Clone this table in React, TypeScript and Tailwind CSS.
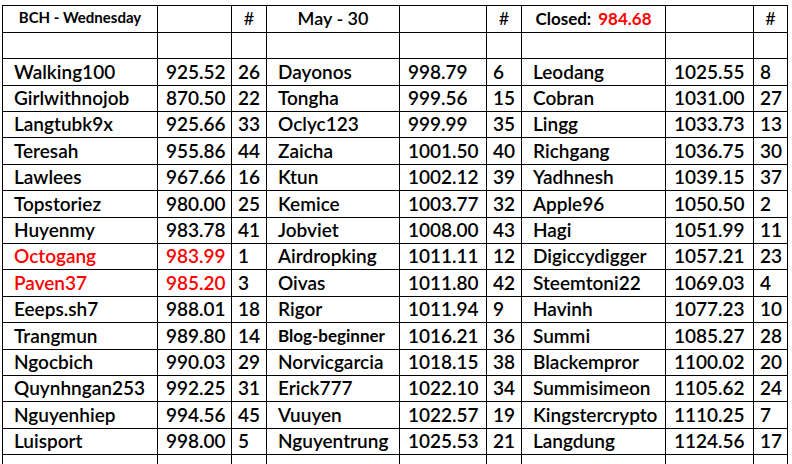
const rows: [string, string, string][][] = [
  [["Walking100", "925.52", "26"], ["Dayonos", "998.79", "6"], ["Leodang", "1025.55", "8"]],
  [["Girlwithnojob", "870.50", "22"], ["Tongha", "999.56", "15"], ["Cobran", "1031.00", "27"]],
  [["Langtubk9x", "925.66", "33"], ["Oclyc123", "999.99", "35"], ["Lingg", "1033.73", "13"]],
  [["Teresah", "955.86", "44"], ["Zaicha", "1001.50", "40"], ["Richgang", "1036.75", "30"]],
  [["Lawlees", "967.66", "16"], ["Ktun", "1002.12", "39"], ["Yadhnesh", "1039.15", "37"]],
  [["Topstoriez", "980.00", "25"], ["Kemice", "1003.77", "32"], ["Apple96", "1050.50", "2"]],
  [["Huyenmy", "983.78", "41"], ["Jobviet", "1008.00", "43"], ["Hagi", "1051.99", "11"]],
  [["Octogang", "983.99", "1"], ["Airdropking", "1011.11", "12"], ["Digiccydigger", "1057.21", "23"]],
  [["Paven37", "985.20", "3"], ["Oivas", "1011.80", "42"], ["Steemtoni22", "1069.03", "4"]],
  [["Eeeps.sh7", "988.01", "18"], ["Rigor", "1011.94", "9"], ["Havinh", "1077.23", "10"]],
  [["Trangmun", "989.80", "14"], ["Blog-beginner", "1016.21", "36"], ["Summi", "1085.27", "28"]],
  [["Ngocbich", "990.03", "29"], ["Norvicgarcia", "1018.15", "38"], ["Blackempror", "1100.02", "20"]],
  [["Quynhngan253", "992.25", "31"], ["Erick777", "1022.10", "34"], ["Summisimeon", "1105.62", "24"]],
  [["Nguyenhiep", "994.56", "45"], ["Vuuyen", "1022.57", "19"], ["Kingstercrypto", "1110.25", "7"]],
  [["Luisport", "998.00", "5"], ["Nguyentrung", "1025.53", "21"], ["Langdung", "1124.56", "17"]],
];

const red = new Set(["Octogang", "Paven37"]);

function Cell({ children, className = "" }: { children?: React.ReactNode; className?: string }) {
  return <div className={`bg-white flex items-center overflow-hidden whitespace-nowrap ${className}`}>{children}</div>;
}

export default function App() {
  return (
    <div className="w-[792px] h-[464px] bg-white overflow-hidden pl-[2px] pt-[5px]" style={{ fontFamily: "Lato, 'Open Sans', sans-serif" }}>
      <div className="inline-grid bg-black gap-px p-px grid-cols-[154px_73px_34px_132px_86px_34px_143px_87px_33px] grid-rows-[26px_25px_repeat(16,25.4px)] text-black">
        <Cell className="justify-center font-bold text-[15px] pb-[4px]">BCH - Wednesday</Cell>
        <Cell />
        <Cell className="justify-center text-[18px] pb-[1px]">#</Cell>
        <Cell className="justify-center font-semibold text-[18px] pb-[1px]">May - 30</Cell>
        <Cell />
        <Cell className="justify-center text-[18px] pb-[1px]">#</Cell>
        <Cell className="justify-center font-bold text-[17px] pb-[2px]">
          Closed:<span className="ml-[7px] text-[#ff0000]">984.68</span>
        </Cell>
        <Cell />
        <Cell className="justify-center text-[18px] pb-[1px]">#</Cell>
        {Array.from({ length: 9 }).map((_, i) => (
          <Cell key={`e${i}`} />
        ))}
        {rows.map((row, r) =>
          row.map(([name, score, rank], g) => {
            const color = red.has(name) ? "text-[#ff0000]" : "";
            const small = name === "Blog-beginner";
            return [
              <Cell key={`${r}-${g}-n`} className={`pl-[11px] ${small ? "text-[17px] font-bold" : "text-[19px] font-semibold"} ${color}`}>
                {name}
              </Cell>,
              <Cell key={`${r}-${g}-s`} className={`pl-[8px] text-[19px] font-semibold ${color}`}>
                {score}
              </Cell>,
              <Cell key={`${r}-${g}-r`} className="pl-[6px] text-[19px] font-semibold">
                {rank}
              </Cell>,
            ];
          })
        )}
        {Array.from({ length: 9 }).map((_, i) => (
          <Cell key={`z${i}`} />
        ))}
      </div>
    </div>
  );
}
